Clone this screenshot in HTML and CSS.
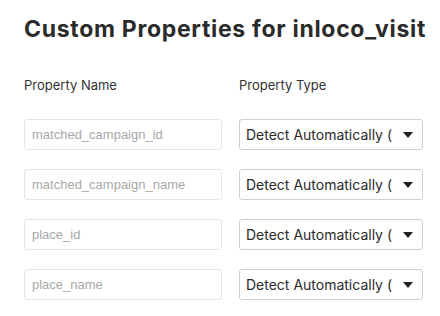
FILE: index.html
```html
<!DOCTYPE html>
<html lang="en">
<head>
    <meta charset="UTF-8">
    <title>Custom Properties</title>
    <link rel="stylesheet" href="styles.css">
</head>
<body>
    <div class="container">
        <h1 class="title">Custom Properties for inloco_visit</h1>

        <div class="props">
            <div class="label">Property Name</div>
            <div class="label">Property Type</div>

            <input class="name-input" placeholder="matched_campaign_id">
            <div class="type-select"><span class="type-text">Detect Automatically (</span><span class="caret"></span></div>

            <input class="name-input" placeholder="matched_campaign_name">
            <div class="type-select"><span class="type-text">Detect Automatically (</span><span class="caret"></span></div>

            <input class="name-input" placeholder="place_id">
            <div class="type-select"><span class="type-text">Detect Automatically (</span><span class="caret"></span></div>

            <input class="name-input" placeholder="place_name">
            <div class="type-select"><span class="type-text">Detect Automatically (</span><span class="caret"></span></div>
        </div>
    </div>
</body>
</html>
```

FILE: styles.css
```css
* {
    margin: 0;
    padding: 0;
    box-sizing: border-box;
}

body {
    background: #fff;
    color: #333;
    font-family: 'Liberation Sans', Arial, sans-serif;
}

.container {
    padding: 15px 0 0 24px;
}

.title {
    font-family: 'Inter', 'Liberation Sans', sans-serif;
    font-size: 23px;
    font-weight: 700;
    line-height: 28px;
    letter-spacing: 0.7px;
    color: #2b2b2b;
    white-space: nowrap;
}

.props {
    display: grid;
    grid-template-columns: 198px 184px;
    column-gap: 17px;
    row-gap: 19px;
    margin-top: 34px;
}

.label {
    font-family: 'Inter', 'Liberation Sans', sans-serif;
    font-size: 13px;
    line-height: 16px;
    color: #333;
    margin-bottom: 7px;
}

.name-input {
    height: 31px;
    border: 1px solid #e6e6e6;
    border-radius: 3px;
    padding: 0 7px;
    font-family: 'Liberation Sans', Arial, sans-serif;
    font-size: 13px;
    color: #333;
    outline: none;
}

.name-input::placeholder {
    color: #a8a8a8;
}

.type-select {
    height: 31px;
    border: 1px solid #cfcfcf;
    border-radius: 3px;
    display: flex;
    align-items: center;
    padding: 0 9px 0 6px;
    gap: 8px;
}

.type-text {
    flex: 1;
    overflow: hidden;
    white-space: nowrap;
    font-family: 'Inter', 'Liberation Sans', sans-serif;
    font-size: 14px;
    color: #2b2b2b;
}

.caret {
    width: 0;
    height: 0;
    border-left: 5.5px solid transparent;
    border-right: 5.5px solid transparent;
    border-top: 6px solid #222;
}
```
